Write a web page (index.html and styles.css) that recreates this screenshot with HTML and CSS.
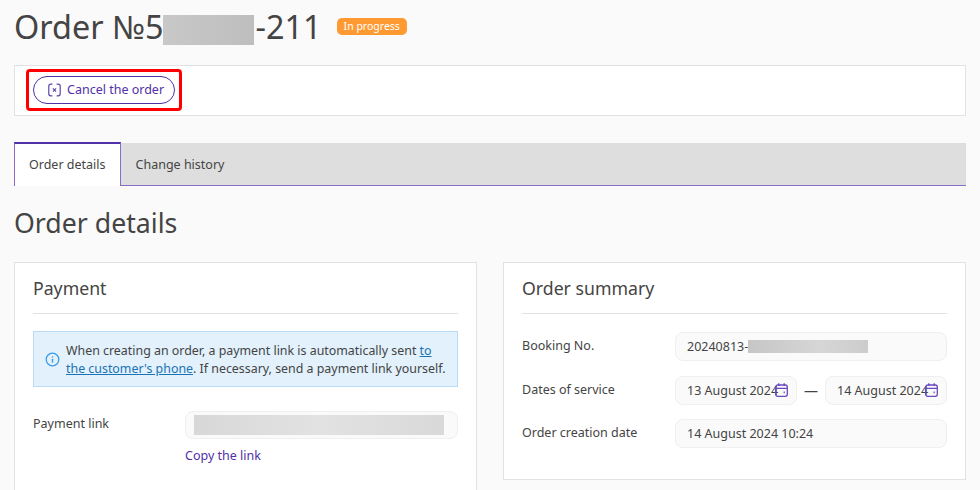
FILE: index.html
```html
<!DOCTYPE html>
<html lang="en">
<head>
  <meta charset="UTF-8">
  <meta name="viewport" content="width=device-width, initial-scale=1.0">
  <title>Order details</title>
  <link rel="stylesheet" href="styles.css">
</head>
<body>

  <div class="page">
    <!-- Title -->
    <div class="order-head">
      <h1>Order №5<span class="blur blur-title"></span>-211</h1>
      <span class="status">In progress</span>
    </div>

    <!-- Actions -->
    <div class="actions">
      <div class="highlight">
        <button class="cancel-btn">
          <svg width="13" height="14" viewBox="0 0 13 14" fill="none" stroke="#5f45a8" stroke-width="1.2">
            <path d="M4.4 1.2H2.8Q.8 1.2 .8 3.2V10.8Q.8 12.8 2.8 12.8H4.4"/>
            <path d="M8.6 1.2H10.2Q12.2 1.2 12.2 3.2V10.8Q12.2 12.8 10.2 12.8H8.6"/>
            <path d="M4.9 5.4L8.1 8.6M8.1 5.4L4.9 8.6"/>
          </svg>
          <span class="cancel-label">Cancel the order</span>
        </button>
      </div>
    </div>

    <!-- Tabs -->
    <div class="tabs">
      <div class="tab active">Order details</div>
      <div class="tab">Change history</div>
    </div>

    <h2>Order details</h2>

    <div class="cards">
      <!-- Payment -->
      <div class="card card-payment">
        <h3>Payment</h3>
        <div class="alert">
          <svg width="15" height="15" viewBox="0 0 15 15" fill="none" stroke="#3d9be9" stroke-width="1.3">
            <circle cx="7.5" cy="7.5" r="6.3"/>
            <path d="M7.5 6.8V10.6" stroke-width="1.4"/>
            <path d="M7.5 4.4V5.6" stroke-width="1.4"/>
          </svg>
          <p>When creating an order, a payment link is automatically sent <a href="#">to the customer's phone</a>. If necessary, send a payment link yourself.</p>
        </div>
        <div class="row row-link">
          <label>Payment link</label>
          <div class="field field-link"><span class="blur blur-link"></span></div>
        </div>
        <a class="copy-link" href="#">Copy the link</a>
      </div>

      <!-- Summary -->
      <div class="card card-summary">
        <h3>Order summary</h3>
        <div class="row">
          <label>Booking No.</label>
          <div class="field">20240813-<span class="blur blur-booking"></span></div>
        </div>
        <div class="row">
          <label>Dates of service</label>
          <div class="dates">
            <div class="field date">13 August 2024
              <svg class="cal" width="13" height="14" viewBox="0 0 13 14" fill="none" stroke="#6a48c0" stroke-width="1.3">
                <rect x=".7" y="2" width="11.6" height="11.3" rx="2"/>
                <path d="M.7 5.4H12.3M3.8 .3V3M9.2 .3V3"/>
                <path d="M8.6 9.4H9.8" stroke-width="1.6"/>
              </svg>
            </div>
            <span class="dash">—</span>
            <div class="field date">14 August 2024
              <svg class="cal" width="13" height="14" viewBox="0 0 13 14" fill="none" stroke="#6a48c0" stroke-width="1.3">
                <rect x=".7" y="2" width="11.6" height="11.3" rx="2"/>
                <path d="M.7 5.4H12.3M3.8 .3V3M9.2 .3V3"/>
                <path d="M8.6 9.4H9.8" stroke-width="1.6"/>
              </svg>
            </div>
          </div>
        </div>
        <div class="row">
          <label>Order creation date</label>
          <div class="field">14 August 2024 10:24</div>
        </div>
      </div>
    </div>
  </div>

</body>
</html>
```

FILE: styles.css
```css
html, body {
  height: 100%;
  overflow: hidden;
}
body {
  font-family: "Noto Sans", "Open Sans", sans-serif;
  font-size: 12.5px;
  color: #444;
  margin: 0;
  background-color: #fafafa;
}
.page {
  padding: 0 14px;
}
.order-head {
  display: flex;
  align-items: center;
  height: 53px;
  gap: 15px;
}
h1 {
  margin: 0;
  font-size: 32.4px;
  font-weight: 400;
  line-height: 53px;
  white-space: nowrap;
}
.blur {
  display: inline-block;
  background: linear-gradient(90deg, #c8c8c8, #bebebe);
}
.blur-title {
  width: 91px;
  height: 30px;
  vertical-align: -6px;
  margin-left: -1px;
  margin-right: 2px;
}
.blur-link {
  display: block;
  width: 250px;
  height: 20px;
  background: linear-gradient(90deg, #d8d8d8, #e2e2e2 50%, #d9d9d9);
}
.blur-booking {
  width: 120px;
  height: 13px;
  vertical-align: -2px;
  background: linear-gradient(90deg, #c6c6c6, #d6d6d6 60%, #cccccc);
}
.status {
  background-color: #ff9a33;
  color: #fff;
  font-size: 10.5px;
  line-height: 17px;
  padding: 0 7px;
  border-radius: 5px;
}
.actions {
  margin-top: 12px;
  height: 51px;
  box-sizing: border-box;
  background-color: #fff;
  border: 1px solid #e2e2e2;
  padding: 3px 11px;
}
.highlight {
  display: inline-block;
  border: 3px solid #f00;
  border-radius: 4px;
  padding: 4px;
}
.cancel-btn {
  display: flex;
  align-items: center;
  gap: 6px;
  height: 28px;
  width: 142px;
  padding: 0 0 0 14px;
  background: #fff;
  color: #5131a8;
  border: 1px solid #5131a8;
  border-radius: 14px;
  font-family: inherit;
  font-size: 12.5px;
  white-space: nowrap;
}
.cancel-label {
  margin-bottom: 2px;
}
.tabs {
  display: flex;
  margin-top: 27px;
  height: 42px;
  background-color: #dedede;
  border-bottom: 1px solid #8a6cc9;
}
.tab {
  padding: 0 15px;
  line-height: 44px;
}
.tab.active {
  margin-top: -1px;
  height: 44px;
  box-sizing: border-box;
  background-color: #fff;
  border: 1px solid #8a6cc9;
  border-top: 2px solid #5131a8;
  border-bottom: none;
  padding: 0 14px;
  line-height: 42px;
}
h2 {
  margin: 16px 0 18px;
  font-size: 26.7px;
  font-weight: 400;
  line-height: 42px;
}
.cards {
  display: grid;
  grid-template-columns: 463px 463px;
  justify-content: space-between;
  align-items: start;
}
.card {
  box-sizing: border-box;
  background-color: #fff;
  border: 1px solid #e2e2e2;
  padding: 0 18px;
}
.card-payment {
  height: 228px;
  border-bottom: none;
}
.card-summary {
  height: 218px;
}
.card-summary .row label {
  width: 153px;
}
h3 {
  margin: 0 0 18px;
  font-size: 17.7px;
  font-weight: 400;
  line-height: 50px;
  border-bottom: 1px solid #e2e2e2;
}
.alert {
  display: flex;
  align-items: center;
  gap: 6px;
  margin-top: -1px;
  height: 56px;
  box-sizing: border-box;
  padding: 0 0 0 11px;
  background-color: #e2f1fc;
  border: 1px solid #b8dcf7;
}
.alert p {
  margin: 2px 0 0;
  font-size: 12.4px;
  line-height: 18px;
  width: 385px;
}
.alert a {
  color: #1a73b5;
}
.row {
  display: flex;
  margin-bottom: 14.5px;
}
.row-link {
  margin-top: 24px;
  margin-bottom: 8px;
}
.row label {
  width: 152px;
  flex: none;
  line-height: 27px;
}
.row-link label {
  line-height: 25px;
}
.field {
  flex: 1;
  box-sizing: border-box;
  display: flex;
  align-items: center;
  white-space: pre;
  height: 29px;
  padding: 0 11px;
  background-color: #fafafa;
  border: 1px solid #efefef;
  border-radius: 8px;
}
.field-link {
  height: 28px;
  padding: 0 8px;
}
.dates {
  flex: 1;
  display: flex;
  align-items: center;
}
.date {
  position: relative;
  flex: none;
  width: 122px;
  white-space: nowrap;
}
.cal {
  position: absolute;
  top: 6px;
  right: 8px;
}
.dash {
  width: 28px;
  font-size: 14px;
  text-align: center;
}
.copy-link {
  display: block;
  margin-left: 152px;
  color: #5131a8;
  text-decoration: none;
}
```
